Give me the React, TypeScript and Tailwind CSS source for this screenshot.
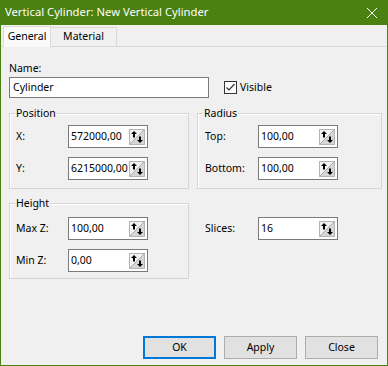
import React from 'react';

// spin button glyph drawn inside every numeric edit
const SpinIcon = () => (
  <svg width="16" height="16" viewBox="0 0 16 16" className="shrink-0">
    <rect x="0.5" y="0.5" width="15" height="15" fill="#f2f2f2" stroke="#b4b4b4" />
    <path d="M1 15 L15 1 L15 15 Z" fill="#d6d6d6" />
    <path d="M1 15 L15 1" stroke="#a8a8a8" />
    <path d="M2 5 L5 2 L8 5 Z" fill="#000" />
    <rect x="4" y="4.5" width="2" height="4" fill="#000" />
    <path d="M8 11 L11 14 L14 11 Z" fill="#000" />
    <rect x="10" y="7.5" width="2" height="4" fill="#000" />
  </svg>
);

const SpinEdit = ({ value }: { value: string }) => (
  <div className="flex h-[23px] w-[80px] items-center justify-between border border-[#7a7a7a] bg-white pl-[2px] pr-[2px]">
    <span className="whitespace-nowrap leading-none">{value}</span>
    <SpinIcon />
  </div>
);

const Field = ({ label, value, labelW }: { label: string; value: string; labelW: string }) => (
  <div className="flex items-center">
    <span className={labelW}>{label}</span>
    <SpinEdit value={value} />
  </div>
);

const Group = ({ title, children, className }: { title: string; children: React.ReactNode; className: string }) => (
  <div className={`relative border border-[#d5d5d5] shadow-[inset_1px_1px_0_#ffffff] ${className}`}>
    <span className="absolute -top-[7px] left-[5px] bg-[#f0f0f0] px-[1px] leading-[12px]">{title}</span>
    {children}
  </div>
);

export default function App() {
  return (
    <div className="flex h-[366px] w-[388px] flex-col border-x border-b border-[#4a8110] bg-[#f0f0f0] font-['Noto_Sans',sans-serif] text-[10.5px] text-black">
      {/* title bar */}
      <div className="flex h-[25px] shrink-0 items-center justify-between bg-[#4a8110] pl-[4px] pr-[10px] text-[11.25px] text-white">
        <span>Vertical Cylinder: New Vertical Cylinder</span>
        <svg width="10" height="10" viewBox="0 0 10 10">
          <path d="M0 0 L10 10 M10 0 L0 10" stroke="#fff" strokeWidth="1" />
        </svg>
      </div>

      {/* tabs */}
      <div className="flex h-[22px] shrink-0 items-end border-b border-[#d9d9d9] pl-[2px]">
        <div className="relative z-10 -mb-px flex h-[21px] w-[48px] items-center justify-center border border-b-0 border-[#d9d9d9] bg-[#fafafa]">
          General
        </div>
        <div className="flex h-[19px] w-[66px] items-center justify-center border-t border-r border-[#d9d9d9]">
          Material
        </div>
      </div>

      <div className="flex flex-1 flex-col pl-[8px]">
        <div className="mt-[14px] leading-[14px]">Name:</div>
        <div className="mt-[2px] flex items-center">
          <div className="flex h-[21px] w-[200px] items-center border border-[#7a7a7a] bg-white pl-[3px]">Cylinder</div>
          <div className="ml-[15px] flex items-center gap-[3px]">
            <div className="flex h-[13px] w-[13px] items-center justify-center border border-[#333] bg-white">
              <svg width="11" height="11" viewBox="0 0 11 11">
                <path d="M1.5 5.5 L4 8 L9.5 2" fill="none" stroke="#333" strokeWidth="1.2" />
              </svg>
            </div>
            <span>Visible</span>
          </div>
        </div>

        <div className="mt-[15px] flex gap-[8px]">
          <div className="flex w-[180px] flex-col">
            <Group title="Position" className="flex h-[76px] flex-col gap-[9px] pl-[6px] pt-[11px]">
              <Field label="X:" value="572000,00" labelW="w-[52px]" />
              <Field label="Y:" value="6215000,00" labelW="w-[52px]" />
            </Group>
            <Group title="Height" className="mt-[14px] flex h-[76px] flex-col gap-[9px] pl-[6px] pt-[13px]">
              <Field label="Max Z:" value="100,00" labelW="w-[52px]" />
              <Field label="Min Z:" value="0,00" labelW="w-[52px]" />
            </Group>
          </div>
          <div className="flex w-[185px] flex-col">
            <Group title="Radius" className="flex h-[76px] flex-col gap-[9px] pl-[7px] pt-[11px]">
              <Field label="Top:" value="100,00" labelW="w-[53px]" />
              <Field label="Bottom:" value="100,00" labelW="w-[53px]" />
            </Group>
            <div className="mt-[28px] pl-[8px]">
              <Field label="Slices:" value="16" labelW="w-[53px]" />
            </div>
          </div>
        </div>

        <div className="mt-auto flex justify-end gap-[8px] pb-[6px] pr-[9px]">
          <button className="h-[23px] w-[73px] border-2 border-[#0078d7] bg-[#e1e1e1]">OK</button>
          <button className="h-[23px] w-[73px] border border-[#adadad] bg-[#e1e1e1]">Apply</button>
          <button className="h-[23px] w-[73px] border border-[#adadad] bg-[#e1e1e1]">Close</button>
        </div>
      </div>
    </div>
  );
}
